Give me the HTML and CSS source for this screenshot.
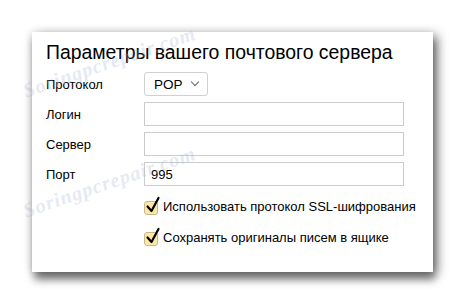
FILE: index.html
```html
<!DOCTYPE html>
<html>
<head>
    <title>Параметры почтового сервера</title>
    <link rel="stylesheet" href="styles.css">
</head>
<body>
    <div class="page">
        <div class="card">
            <h1>Параметры вашего почтового сервера</h1>

            <div class="row">
                <label class="lbl">Протокол</label>
                <div class="select">POP <span class="arrow"></span></div>
            </div>
            <div class="row">
                <label class="lbl">Логин</label>
                <input type="text" class="field">
            </div>
            <div class="row">
                <label class="lbl">Сервер</label>
                <input type="text" class="field">
            </div>
            <div class="row">
                <label class="lbl">Порт</label>
                <input type="text" class="field" value="995">
            </div>

            <div class="check">
                <span class="box">
                    <svg viewBox="0 0 18 20" width="18" height="20"><path d="M3.5 12.5 L7.5 17 L14.5 4" fill="none" stroke="#000" stroke-width="2.2" stroke-linecap="round" stroke-linejoin="round"/></svg>
                </span>
                Использовать протокол SSL-шифрования
            </div>
            <div class="check">
                <span class="box">
                    <svg viewBox="0 0 18 20" width="18" height="20"><path d="M3.5 12.5 L7.5 17 L14.5 4" fill="none" stroke="#000" stroke-width="2.2" stroke-linecap="round" stroke-linejoin="round"/></svg>
                </span>
                Сохранять оригиналы писем в ящике
            </div>
        </div>
    </div>

    <!-- водяные знаки поверх скриншота -->
    <div class="wm wm1">Soringpcrepair.com</div>
    <div class="wm wm2">Soringpcrepair.com</div>
</body>
</html>
```

FILE: styles.css
```css
body {
    margin: 0;
    background-color: #fff;
    font-family: Arial, "Liberation Sans", sans-serif;
    color: #000;
}
.page {
    height: 304px;
    padding: 32px 0 0 32px;
    box-sizing: border-box;
}
.card {
    width: 401px;
    height: 240px;
    box-sizing: border-box;
    padding: 8px 0 0 14px;
    background-color: #fff;
    box-shadow: -2px 0 8px rgba(0, 0, 0, 0.12),
                6px 2px 10px rgba(0, 0, 0, 0.3),
                2px 8px 8px rgba(0, 0, 0, 0.45);
}
h1 {
    margin: 0 0 8px 0;
    font-size: 19.4px;
    font-weight: normal;
    line-height: 24px;
}
.row {
    display: flex;
    align-items: center;
    height: 24px;
    margin-bottom: 6px;
}
.lbl {
    width: 98px;
    font-size: 13px;
}
.select {
    display: flex;
    align-items: center;
    height: 24px;
    box-sizing: border-box;
    padding: 0 9px 0 9px;
    border: 1px solid #d0d0d0;
    border-radius: 3px;
    font-size: 13.5px;
}
.arrow {
    width: 5px;
    height: 5px;
    margin: -4px 0 0 9px;
    border-right: 1px solid #666;
    border-bottom: 1px solid #666;
    transform: rotate(45deg);
}
.field {
    width: 260px;
    height: 24px;
    box-sizing: border-box;
    margin: 0;
    padding: 0 6px;
    border: 1px solid #ccc;
    font-family: inherit;
    font-size: 13px;
    color: #000;
}
.check {
    display: flex;
    align-items: center;
    margin: 2px 0 0 98px;
    height: 29px;
    font-size: 13px;
}
.box {
    position: relative;
    width: 12px;
    height: 12px;
    margin: 3px 5px 0 0;
    background-color: #fde7a6;
    border: 1px solid #c8b98d;
    border-radius: 3px;
}
.box svg {
    position: absolute;
    left: -1px;
    top: -8px;
}
.wm {
    position: absolute;
    font-family: "Liberation Serif", serif;
    font-style: italic;
    font-weight: bold;
    font-size: 20px;
    letter-spacing: 1px;
    color: rgba(165, 180, 215, 0.3);
    transform: rotate(-19deg);
    transform-origin: left center;
    white-space: nowrap;
    pointer-events: none;
}
.wm1 { left: 24px; top: 80px; }
.wm2 { left: 24px; top: 200px; }
```
